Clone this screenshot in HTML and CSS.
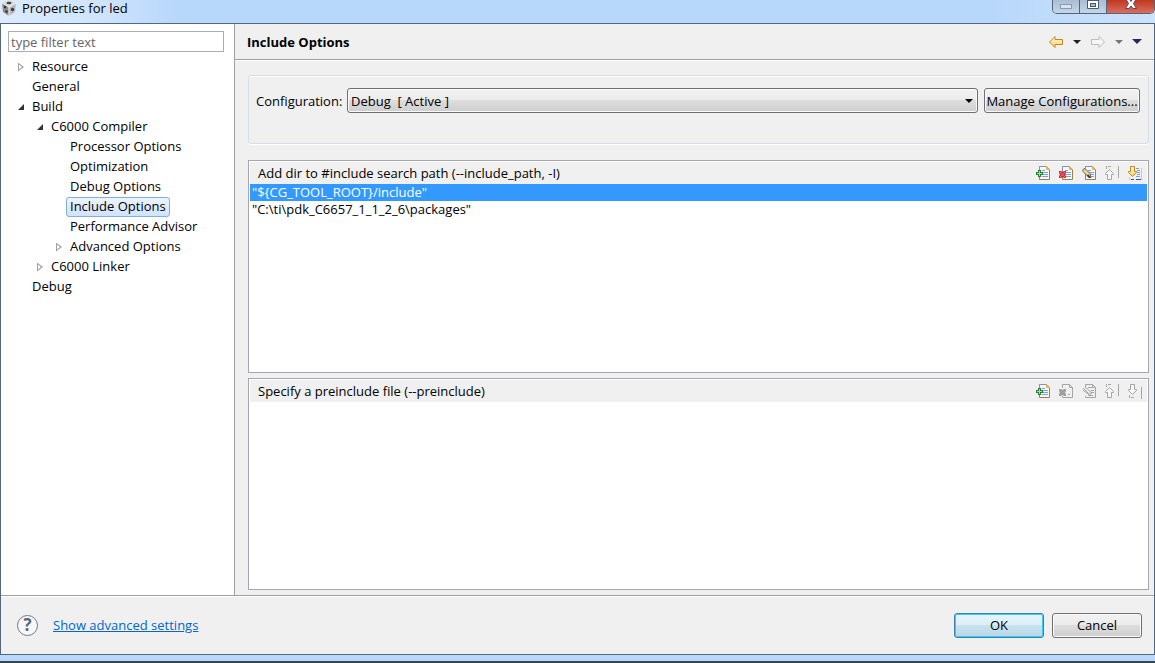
FILE: index.html
```html
<!DOCTYPE html>
<html lang="en">
<head>
  <meta charset="UTF-8" />
  <meta name="viewport" content="width=device-width, initial-scale=1.0"/>
  <title>Properties for led</title>
  <link rel="stylesheet" href="styles.css">
</head>
<body>
  <!-- shared icon shapes -->
  <svg class="defs" width="0" height="0" aria-hidden="true">
    <defs>
      <linearGradient id="gold" x1="0" y1="0" x2="0" y2="1">
        <stop offset="0" stop-color="#fffbe0"/>
        <stop offset="1" stop-color="#f8d060"/>
      </linearGradient>
      <symbol id="page" viewBox="0 0 16 16">
        <path d="M4.500 1.500h7l3 3v10h-10z" fill="#f4f8ff" stroke="#a08048"/>
        <path d="M4.500 9V1.500h6" fill="none" stroke="#8494b8"/>
        <path d="M11 1v4h4z" fill="#e8b860"/>
        <path d="M7 5.500h3M7 7.500h6M7 9.500h6M7 11.500h6" stroke="#7f9fd8"/>
      </symbol>
      <symbol id="page-off" viewBox="0 0 16 16">
        <path d="M4.500 5V1.500h7l3 3v10h-10V13M11.500 1.500v3h3" fill="none" stroke="#a5a5a5"/>
      </symbol>
      <symbol id="add" viewBox="0 0 16 16">
        <use href="#page"/>
        <path d="M3 5h3v2h2v3H6v2H3v-2H1V7h2z" fill="#23803c"/>
        <path d="M4.500 6v5M2 8.500h5" stroke="#b8e070"/>
      </symbol>
      <symbol id="delete" viewBox="0 0 16 16">
        <use href="#page"/>
        <path d="M1 6h2l1.500 1L6 6h2v2L7 9.500 8 11v2H6l-1.500-1L3 13H1v-2l1-1.500L1 8z" fill="#d82c38"/>
        <path d="M2 7l5 5M7 7l-5 5" stroke="#f07078"/>
      </symbol>
      <symbol id="delete-off" viewBox="0 0 16 16">
        <use href="#page-off"/>
        <path d="M1 6h2l1.500 1L6 6h2v2L7 9.500 8 11v2H6l-1.500-1L3 13H1v-2l1-1.500L1 8z" fill="#a0a0a0"/>
        <path d="M10 11.500h2" stroke="#a5a5a5"/>
      </symbol>
      <symbol id="edit" viewBox="0 0 16 16">
        <use href="#page"/>
        <path d="M2 4.500l2-1 5 5 1 4-3-1-5-5z" fill="#f0d898" stroke="#706048"/>
        <path d="M7 9l3 4H8l-2-2z" fill="#333"/>
      </symbol>
      <symbol id="edit-off" viewBox="0 0 16 16">
        <use href="#page-off"/>
        <path d="M7 4.500h4M10 7.500h3M10 9.500h3M7 12.500h5M2 5l6 6M2 7l5 4h3V9L5 5" fill="none" stroke="#a5a5a5"/>
      </symbol>
      <symbol id="up-off" viewBox="0 0 16 16">
        <path d="M5.500 4.500l4 4v1h-2v5h-4v-5h-2v-1z" fill="#f6f6f6" stroke="#a5a5a5"/>
        <path d="M2.500 1v3M4 1.500h3M14.500 1v12" stroke="#a5a5a5"/>
      </symbol>
      <symbol id="down" viewBox="0 0 16 16">
        <path d="M9 3.500h3M10 5.500h3M10 7.500h3M10 9.500h3M9 11.500h4" stroke="#7f9fd8"/>
        <path d="M14.500 3v12M2.500 12v3" stroke="#d8c8a8"/>
        <path d="M4 14.500h3M9 14.500h5" stroke="#2858a8"/>
        <path d="M3.500 1.500h4v5h2v1l-4 4-4-4v-1h2z" fill="url(#gold)" stroke="#c08820"/>
      </symbol>
      <symbol id="down-off" viewBox="0 0 16 16">
        <path d="M3.500 1.500h4v5h2v1l-4 4-4-4v-1h2z" fill="#f6f6f6" stroke="#a5a5a5"/>
        <path d="M2.500 12v3M4 14.500h3M14.500 4v12" stroke="#a5a5a5"/>
      </symbol>
    </defs>
  </svg>

  <header class="titlebar">
    <svg class="app-icon" width="16" height="16" viewBox="0 0 16 16">
      <path d="M8 0l7 3-7 4-7-4z" fill="#d8d8d8"/>
      <path d="M1 3l7 4v9l-6-4z" fill="#8c8c8c"/>
      <path d="M15 3L8 7v9l6-4z" fill="#b8b8b8"/>
      <path d="M1 3l7 4 7-4M8 7v9" fill="none" stroke="#f4f4f4"/>
      <ellipse cx="8" cy="3" rx="2.500" ry="1.200" fill="#444"/>
      <circle cx="4" cy="7" r="1.200" fill="#333"/>
      <circle cx="5.500" cy="11.500" r="1.200" fill="#333"/>
      <circle cx="11.500" cy="9.500" r="1.700" fill="#3c3c3c"/>
    </svg>
    <span class="title">Properties for led</span>
    <div class="window-buttons">
      <button class="win min" aria-label="Minimize">
        <svg width="12" height="5"><rect x=".5" y=".5" width="11" height="4" fill="#d8e4f0" stroke="#8899b0"/></svg>
      </button>
      <button class="win max" aria-label="Maximize">
        <svg width="12" height="10"><path d="M.5-2v10.500h11V-2M0 .5h12" fill="#fff" stroke="#4c5870"/><rect x="3.500" y="3.500" width="5" height="3" fill="#a8bcd4" stroke="#4c5870"/></svg>
      </button>
      <button class="win close" aria-label="Close">
        <svg width="14" height="11"><path d="M1.500 -1.500h3.500l2 3 2-3h3.500L9.500 3.500l3 5H9L7 6 5 8.500H1.500l3-5z" fill="#fff" stroke="#5c4858"/></svg>
      </button>
    </div>
  </header>

  <div class="window">
    <div class="content">
      <nav class="sidebar">
        <input type="text" class="filter" placeholder="type filter text" aria-label="Filter">
        <ul class="tree">
          <li><div class="row"><span class="arrow closed"></span><span class="label">Resource</span></div></li>
          <li><div class="row"><span class="arrow"></span><span class="label">General</span></div></li>
          <li>
            <div class="row"><span class="arrow open"></span><span class="label">Build</span></div>
            <ul>
              <li>
                <div class="row"><span class="arrow open"></span><span class="label">C6000 Compiler</span></div>
                <ul>
                  <li><div class="row"><span class="arrow"></span><span class="label">Processor Options</span></div></li>
                  <li><div class="row"><span class="arrow"></span><span class="label">Optimization</span></div></li>
                  <li><div class="row"><span class="arrow"></span><span class="label">Debug Options</span></div></li>
                  <li><div class="row"><span class="arrow"></span><span class="label selected">Include Options</span></div></li>
                  <li><div class="row"><span class="arrow"></span><span class="label">Performance Advisor</span></div></li>
                  <li><div class="row"><span class="arrow closed"></span><span class="label">Advanced Options</span></div></li>
                </ul>
              </li>
              <li><div class="row"><span class="arrow closed"></span><span class="label">C6000 Linker</span></div></li>
            </ul>
          </li>
          <li><div class="row"><span class="arrow"></span><span class="label">Debug</span></div></li>
        </ul>
      </nav>

      <main class="main">
        <div class="page-header">
          <h1>Include Options</h1>
          <div class="nav-buttons">
            <button class="tool" aria-label="Back">
              <svg width="16" height="14" viewBox="0 0 16 14"><path d="M1.500 7l5.500-5.500v3h7.500v5H7v3z" fill="url(#gold)" stroke="#c08820"/></svg>
            </button>
            <button class="tool" aria-label="Back history">
              <svg width="8" height="4" viewBox="0 0 8 4"><path d="M0 0h8L4 4z" fill="#222"/></svg>
            </button>
            <button class="tool" aria-label="Forward" disabled>
              <svg width="16" height="14" viewBox="0 0 16 14"><path d="M14.500 7L9 1.500v3H1.500v5H9v3z" fill="#f6f6f4" stroke="#bdbdb5"/></svg>
            </button>
            <button class="tool" aria-label="Forward history" disabled>
              <svg width="8" height="4" viewBox="0 0 8 4"><path d="M0 0h8L4 4z" fill="#777"/></svg>
            </button>
            <button class="tool" aria-label="Menu">
              <svg width="10" height="5" viewBox="0 0 10 5"><path d="M0 0h10L5 5z" fill="#2c2468"/></svg>
            </button>
          </div>
        </div>

        <div class="page-body">
          <div class="config">
            <label for="config">Configuration:</label>
            <select id="config">
              <option>Debug&nbsp; [ Active ]</option>
              <option>Release</option>
            </select>
            <button class="btn manage">Manage Configurations...</button>
          </div>

          <section class="panel">
            <div class="panel-header">
              <h2>Add dir to #include search path (--include_path, -I)</h2>
              <div class="tools">
                <button class="tool" aria-label="Add"><svg width="16" height="16"><use href="#add"/></svg></button>
                <button class="tool" aria-label="Delete"><svg width="16" height="16"><use href="#delete"/></svg></button>
                <button class="tool" aria-label="Edit"><svg width="16" height="16"><use href="#edit"/></svg></button>
                <button class="tool" aria-label="Move up" disabled><svg width="16" height="16"><use href="#up-off"/></svg></button>
                <button class="tool" aria-label="Move down"><svg width="16" height="16"><use href="#down"/></svg></button>
              </div>
            </div>
            <ul class="list">
              <li class="active">"${CG_TOOL_ROOT}/include"</li>
              <li>"C:\ti\pdk_C6657_1_1_2_6\packages"</li>
            </ul>
          </section>

          <section class="panel">
            <div class="panel-header">
              <h2>Specify a preinclude file (--preinclude)</h2>
              <div class="tools">
                <button class="tool" aria-label="Add"><svg width="16" height="16"><use href="#add"/></svg></button>
                <button class="tool" aria-label="Delete" disabled><svg width="16" height="16"><use href="#delete-off"/></svg></button>
                <button class="tool" aria-label="Edit" disabled><svg width="16" height="16"><use href="#edit-off"/></svg></button>
                <button class="tool" aria-label="Move up" disabled><svg width="16" height="16"><use href="#up-off"/></svg></button>
                <button class="tool" aria-label="Move down" disabled><svg width="16" height="16"><use href="#down-off"/></svg></button>
              </div>
            </div>
            <ul class="list"></ul>
          </section>
        </div>
      </main>
    </div>

    <footer class="footer">
      <button class="help" aria-label="Help">?</button>
      <a href="#">Show advanced settings</a>
      <div class="actions">
        <button class="btn primary">OK</button>
        <button class="btn">Cancel</button>
      </div>
    </footer>
  </div>
</body>
</html>
```

FILE: styles.css
```css
:root {
  --frame: #b9d9fb;
  --edge: #55677f;
  --face: #f0f0f0;
  --line: #a0a0a0;
}

* {
  box-sizing: border-box;
}

body {
  font-family: 'Open Sans', 'Noto Sans', sans-serif;
  font-size: 13px;
  line-height: 20px;
  color: #000;
  background: var(--frame);
  margin: 0;
  min-height: 100vh;
  display: flex;
  flex-direction: column;
  border-bottom: 2px solid #3c444e;
  padding-bottom: 6px;
}

ul {
  list-style: none;
  margin: 0;
  padding: 0;
}

button,
input,
select {
  font: inherit;
  color: inherit;
}

.defs {
  position: absolute;
}

/* title bar */
.titlebar {
  height: 23px;
  display: flex;
  align-items: flex-start;
  background: linear-gradient(90deg, #dcecfd 0, #cfe4fc 100px, #b7d7fb 180px, #b7d7fb 85%, #cbe3fb 100%);
}

.app-icon {
  margin: 0 5px 0 1px;
}

.title {
  flex: 1;
  line-height: 16px;
}

.window-buttons {
  display: flex;
  height: 14px;
  border: 1px solid #54647c;
  border-top: none;
  border-radius: 0 0 5px 5px;
  overflow: hidden;
}

.win {
  width: 27px;
  padding: 0;
  border: none;
  border-right: 1px solid #54647c;
  background: linear-gradient(#a9bdd3, #c4d6e8);
  display: flex;
  justify-content: center;
}

.win.min {
  padding-top: 4px;
}

.win.close {
  width: 47px;
  border-right: none;
  background: linear-gradient(#c03820, #d8705c);
}

/* window */
.window {
  flex: 1;
  display: flex;
  flex-direction: column;
  border: 1px solid var(--edge);
  background: var(--face);
}

.content {
  flex: 1;
  display: flex;
}

.sidebar {
  width: 234px;
  background: #fff;
  border-right: 1px solid var(--line);
  padding: 7px 10px 0 7px;
}

.filter {
  display: block;
  width: 100%;
  height: 21px;
  padding: 0 2px;
  border: 1px solid #abadb3;
  background: #fff;
}

.filter::placeholder {
  color: #666;
  opacity: 1;
}

.tree {
  padding: 5px 0 0 6px;
}

.tree ul {
  padding-left: 19px;
}

.row {
  display: flex;
  height: 20px;
}

.arrow {
  width: 14px;
  display: flex;
  align-items: center;
  justify-content: center;
}

.arrow.closed::before {
  content: "";
  width: 6px;
  height: 9px;
  background: #a0a0a0;
  clip-path: polygon(0 0, 100% 50%, 0 100%, 0 0, 1px 2px, 1px 7px, 4px 50%, 1px 2px);
}

.arrow.open::before {
  content: "";
  width: 6px;
  height: 6px;
  background: #333;
  clip-path: polygon(100% 0, 100% 100%, 0 100%);
}

.label {
  padding: 0 3px;
  border: 1px solid transparent;
  border-radius: 3px;
  line-height: 17px;
  white-space: nowrap;
}

.label.selected {
  border-color: #84acdd;
  background: linear-gradient(#edf4fe, #cfe3fd);
}

/* main area */
.main {
  flex: 1;
  display: flex;
  flex-direction: column;
}

.page-header {
  height: 36px;
  display: flex;
  align-items: center;
  padding: 0 12px;
  border-bottom: 1px solid var(--line);
  box-shadow: 0 1px #fff;
}

h1 {
  flex: 1;
  margin: 0;
  font-size: 13px;
  line-height: 20px;
}

.nav-buttons {
  display: flex;
  align-items: center;
  gap: 9px;
}

.tool {
  display: flex;
  padding: 0;
  border: none;
  background: none;
}

.page-body {
  flex: 1;
  display: flex;
  flex-direction: column;
  gap: 5px;
  padding: 15px 5px 5px 13px;
}

.config {
  height: 69px;
  display: flex;
  gap: 6px;
  margin-bottom: 11px;
  padding: 12px 8px 12px 7px;
  border: 1px solid #d5dfe5;
  border-radius: 3px;
  box-shadow: 0 1px #fff, inset 0 1px #fff;
}

.config label {
  width: 85px;
  line-height: 26px;
  white-space: nowrap;
}

select,
.btn {
  height: 25px;
  border: 1px solid #707070;
  border-radius: 3px;
  background: linear-gradient(#f2f2f2 0, #ebebeb 50%, #dddddd 50%, #cfcfcf 100%);
  box-shadow: inset 0 0 0 1px #fafafa;
}

select {
  flex: 1;
  min-width: 0;
  padding: 0 3px;
  appearance: none;
  background: url("data:image/svg+xml,%3Csvg xmlns='http://www.w3.org/2000/svg' width='8' height='4'%3E%3Cpath d='M0 0h8L4 4z'/%3E%3C/svg%3E") no-repeat right 4px center, linear-gradient(#f2f2f2 0, #ebebeb 50%, #dddddd 50%, #cfcfcf 100%);
}

.btn {
  display: flex;
  align-items: center;
  justify-content: center;
  padding: 0;
  white-space: nowrap;
}

.manage {
  width: 156px;
}

.panel {
  flex: 1;
  display: flex;
  flex-direction: column;
  padding: 1px;
  border: 1px solid #a5a7ad;
  background: #fff;
}

.panel-header {
  height: 22px;
  display: flex;
  align-items: center;
  padding: 0 4px 0 8px;
  background: var(--face);
}

h2 {
  flex: 1;
  margin: 0;
  font-size: 13px;
  font-weight: normal;
  line-height: 20px;
}

.tools {
  display: flex;
  gap: 7px;
}

.list li {
  padding: 0 2px;
  line-height: 17px;
}

.list .active {
  background: #3399ff;
  color: #fff;
}

/* footer */
.footer {
  height: 59px;
  display: flex;
  align-items: center;
  padding: 0 12px 0 16px;
  border-top: 1px solid var(--line);
  box-shadow: inset 0 1px #fff;
}

.help {
  width: 21px;
  height: 21px;
  margin-right: 15px;
  padding: 0;
  border: 1px solid #6b7890;
  border-radius: 50%;
  background: #f8f8fa;
  color: #56647e;
  font-size: 17px;
  font-weight: bold;
  line-height: 18px;
}

.footer a {
  color: #0066cc;
}

.actions {
  display: flex;
  gap: 8px;
  margin-left: auto;
}

.actions .btn {
  width: 90px;
}

.btn.primary {
  border-color: #3c7fb1;
  background: linear-gradient(#e8f4fa 0, #dceef6 50%, #c8e2ee 50%, #b8d8e6 100%);
  box-shadow: inset 0 0 0 1px #35cdf6;
}
```
